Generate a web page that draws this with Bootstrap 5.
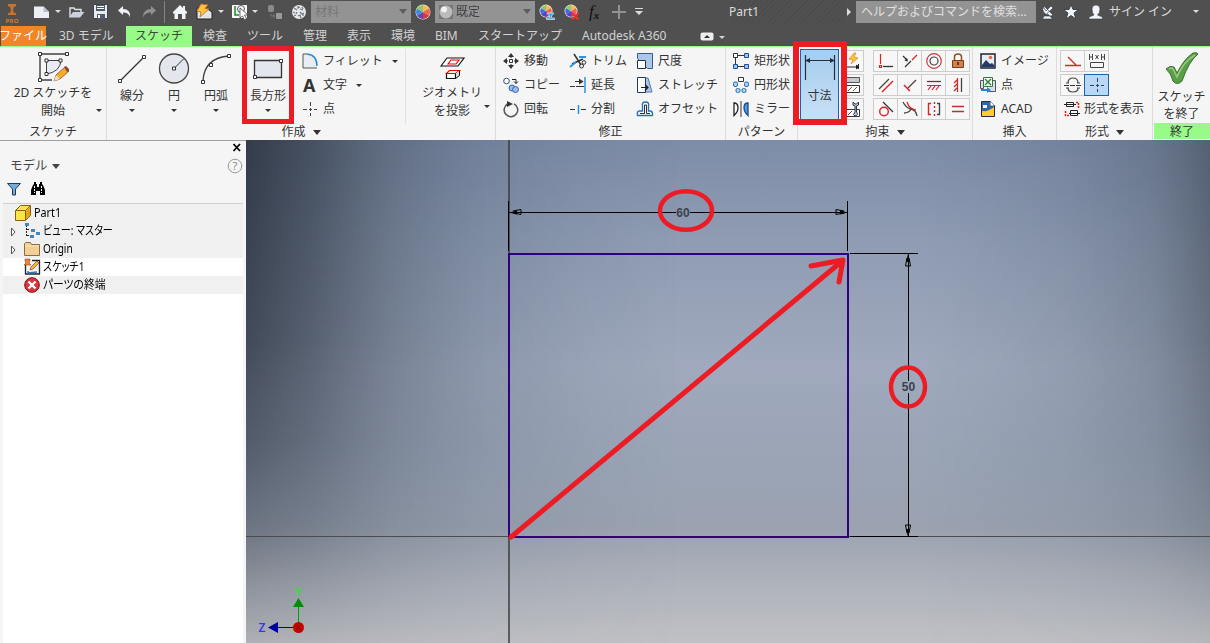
<!DOCTYPE html>
<html lang="ja">
<head>
    <meta charset="UTF-8">
    <meta name="viewport" content="width=device-width, initial-scale=1.0">
    <title>Part1</title>
    <!-- Bootstrap CSS -->
    <link href="https://cdn.jsdelivr.net/npm/bootstrap@5.3.0/dist/css/bootstrap.min.css" rel="stylesheet">
    <style>
        body { width: 1210px; height: 643px; font: 12px/16px "Noto Sans", "Noto Sans CJK JP", sans-serif; color: #333; background: #f5f5f5; }
        svg { display: block; flex: none; overflow: visible; }

        /* Title bar */
        .title-bar { display: grid; height: 22px; background: #505050; color: #dcdcdc; align-items: center;
            grid-template-columns: 34px 21px 14px 24px 24px 25px 18px 12px 24px 22px 13px 21px 15px 24px 20px 104px 20px 103px 25px 26px 22px 22px 96px 116px 11px 185px 23px 24px 21px 84px 17px; }
        .title-bar .caret { display: block; }
        .drop-box { height: 22px; width: 100px; background: #939393; }
        .drop-off { color: #777; }
        .search-box { height: 22px; width: 180px; padding: 0 5px; background: #939393; color: #e0e0e0; line-height: 21px; }
        .fx { font: italic 17px/18px "Liberation Serif", serif; color: #111; }
        .fx sub { font-size: 11px; font-weight: 700; bottom: -2px; }
        .stripes { align-self: stretch; background: repeating-linear-gradient(135deg, #505050 0 3px, #4b4b4b 3px 4px); line-height: 23px; }

        /* Tabs */
        .tab-bar { display: grid; height: 24px; background: #505050; color: #d2d2d2; line-height: 27px;
            grid-template-columns: 59px 67px 77px 44px 56px 44px 44px 44px 43px 104px 117px 1fr; white-space: nowrap; }
        .tab-file { background: #f0852a; color: #fff; width: 45px; height: 20px; margin: 4px 0 0 1px; line-height: 19px; text-indent: -2px; align-self: start; }
        .tab-active { background: #98fb88; color: #444; width: 66px; height: 20px; margin-top: 4px; line-height: 19px; text-align: center; }

        /* Ribbon */
        .ribbon { height: 94px; border-top: 1px solid #98fb88; background: #f5f5f5; }
        .panel { border-right: 1px solid #dcdcdc; padding-top: 2px; flex: none; }
        .panel-body { height: 75px; }
        .panel-label { height: 15px; line-height: 15px; text-align: center; }
        .tool { height: 24px; gap: 4px; }
        .tool-wide { gap: 5px; }
        .tool span { white-space: nowrap; }
        .big { height: 75px; padding-top: 1px; text-align: center; flex: none; }
        .big .txt { line-height: 18px; white-space: nowrap; }
        .big .one { padding-top: 1px; }
        .caret { display: inline-block; width: 0; height: 0; border: 3px solid transparent; border-top: 3px solid currentColor; border-bottom: 0; flex: none; }
        .caret-lg { border-width: 4px; border-top-width: 5px; border-bottom: 0; }
        .btn-grid { display: grid; grid-auto-rows: 24px; }
        .cols-4 { grid-template-columns: repeat(4, 24px); width: 96px; margin-left: 10px; }
        .cols-2 { grid-template-columns: 24px 24px; }
        .cols-1 { width: 22px; margin-left: 2px; }
        .cell { border: 1px solid #ccc; height: 22px; margin: 1px -1px 0 0; display: flex; align-items: center; justify-content: center; background: #f7f7f7; }
        .cell-on { background: #b9d8f5; border-color: #1763ad; position: relative; }
        .dim-btn { width: 39px; height: 73px; margin-left: 2px; background: linear-gradient(#a5cdef, #c9e0f6); border: 1px solid #1763ad; border-bottom: 0; }
        .exit-label { background: #98fb88; height: 16px; line-height: 17px; margin-left: 1px; }
        .w-sketch { width: 107px; } .w-create { width: 389px; } .w-modify { width: 230px; } .w-pattern { width: 72px; }
        .w-limit { width: 175px; } .w-insert { width: 84px; } .w-format { width: 96px; } .w-exit { width: 57px; padding-top: 3px; }
        .w-exit .big { height: 73px; }
        .w-exit .txt { line-height: 17px; padding-top: 3px; }
        .b-34 { width: 34px; } .b-50 { width: 50px; } .b-54 { width: 54px; } .b-89 { width: 89px; } .b-106 { width: 106px; }
        .c-67 { width: 67px; } .c-84 { width: 84px; } .c-111 { width: 111px; }
        .in-7 { padding-left: 7px; } .in-3 { padding-left: 3px; }
        .geo { margin: 0 2px 4px 11px; }

        /* Highlight frames over the ribbon */
        .frame { position: absolute; border: 5px solid #ed1c24; z-index: 3; }
        .frame-rect { left: 242px; top: 46px; width: 52px; height: 78px; }
        .frame-dim { left: 793px; top: 41px; width: 54px; height: 84px; border-width: 6px; }

        /* Model browser */
        .browser { width: 246px; height: 503px; padding: 0 3px; border-top: 1px solid #a0a0a0; }
        .browser-head { height: 63px; border-bottom: 1px solid #d0d0d0; }
        .close-row { height: 15px; padding-right: 2px; }
        .name-row { height: 20px; padding-left: 7px; font-size: 12.5px; gap: 4px; color: #444; }
        .icon-row { height: 25px; gap: 9px; }
        .tree { background: #fff; height: 439px; color: #000; line-height: 18px; }
        .tree-row { height: 18px; gap: 3px; padding-left: 7px; background: #f0f0f0; font-feature-settings: "palt"; }
        .tree-row.leaf { padding-left: 21px; }
        .tree-row.root { padding-left: 12px; }
        .tree-row.current { background: #fff; }
        .narrow { display: inline-block; transform: scaleX(.84); transform-origin: 0 50%; white-space: nowrap; }
        .tree .wide { transform: scaleX(.9); }

        /* Graphics window */
        .view { width: 964px; height: 503px; }
    </style>
</head>
<body class="overflow-hidden position-relative">
    <!-- Title bar -->
    <header class="title-bar">
        <svg width="30" height="22"><path d="M8 3h8v2.500h-2L13 9l1 3h2v2H8v-2h2l1-3-1-3.500H8z" fill="#c8742c"/><text x="5.500" y="21.500" font-size="6" font-weight="700" fill="#dc7a25" textLength="13">PRO</text></svg>
        <svg width="16" height="16" viewBox="0 0 16 16"><path d="M0 2.500h9.500L15 8v6H0z" fill="#eceff5"/><path d="M9.500 2.500V8H15z" fill="#b9c0cd"/></svg>
        <span><i class="caret"></i></span>
        <svg width="16" height="16" viewBox="0 0 16 16"><path d="M1 13V4h4l1 1.500h6V8" fill="none" stroke="#dde2ea" stroke-width="1.400"/><path d="M0 13.500 4 8h11.500L11 13.500z" fill="#cbd2de"/></svg>
        <svg width="16" height="16" viewBox="0 0 16 16"><path d="M.5.500h14v14H.5z" fill="#e7ebf2" stroke="#3b4456"/><path d="M3 1h9v6H3zM4 10h8v5H4z" fill="#50596a"/><path d="M4 2h7v1H4zM4 4h7v1H4zM5 11h2v3H5z" fill="#fff"/></svg>
        <svg width="16" height="16" viewBox="0 0 16 16"><path d="M1 6.500 6 2v3q8 0 7 8.500Q12 8.500 6 8.500V11z" fill="#eef1f6"/></svg>
        <svg width="16" height="16" viewBox="0 0 16 16"><path d="M14 6.500 9 2v3q-8 0-8 8.500Q3 8.500 9 8.500V11z" fill="#8e9091"/></svg>
        <svg width="10" height="22"><path d="M4.500 0v22" stroke="#858585"/></svg>
        <svg width="16" height="16" viewBox="0 0 16 16"><path d="M8 1 1 8v1.500h1.500V15H6v-5h4v5h3.500V9.500H15V8l-2-2V2h-2v2z" fill="#f0f3f7"/></svg>
        <svg width="18" height="16" viewBox="0 0 18 16"><path d="M1 4h9l6 4v7H1z" fill="#dfe5ec" stroke="#222"/><path d="M5 0 1 7l4 1-1 5 9-8-4-.500L12 1z" fill="#ffc342" stroke="#c5681b" stroke-width=".8"/></svg>
        <span><i class="caret"></i></span>
        <svg width="18" height="17" viewBox="0 0 18 17"><path d="M1.500 2.500h14v12h-14z" fill="#f2f5f7" stroke="#fff"/><path d="M4 3v9h4" stroke="#248a25" stroke-width="1.500" fill="none"/><circle cx="10" cy="6" r="3.500" fill="none" stroke="#586070"/><path d="m9 5 0 10 2.500-2 2 4 2-1-2-4H17z" fill="#fff" stroke="#333" stroke-width=".7"/></svg>
        <span><i class="caret"></i></span>
        <svg width="16" height="16" viewBox="0 0 16 16"><rect x="1" y="1" width="6" height="7" rx="2" fill="#8b8b8b"/><rect x="9" y="9" width="6" height="6" rx="1" fill="#999"/><path d="M4 10v2h3M6 10l2 2-2 2" fill="none" stroke="#777"/></svg>
        <svg width="16" height="16" viewBox="0 0 16 16"><circle cx="8" cy="8" r="7" fill="#e6e8ea"/><path d="m3 4 3 2M5 11l-2 1M7 2v2l2-1M9 8l2 2 2-1M6 8l-1 2M9 5l3 1M7 12l2-1 1 3M2 8l2 1M11 3l1 2M12 12v-2" fill="none" stroke="#737984" stroke-width="1.200"/></svg>
        <div class="drop-box drop-off d-flex align-items-center justify-content-between px-1"><span>材料</span><i class="caret caret-lg text-dark opacity-50"></i></div>
        <svg width="16" height="16" viewBox="-8 -8 16 16"><circle r="7.500" fill="#eee"/><path d="M0 0V-7A7 7 0 0 1 6 -3.500z" fill="#f8b95b"/><path d="M0 0 6-3.500A7 7 0 0 1 6 3.500z" fill="#ef6844"/><path d="M0 0 6 3.500A7 7 0 0 1 0 7z" fill="#d43a3f"/><path d="M0 0V7A7 7 0 0 1-6 3.500z" fill="#6443b4"/><path d="M0 0-6 3.500A7 7 0 0 1-6-3.500z" fill="#4189df"/><path d="M0 0-6-3.500A7 7 0 0 1 0-7z" fill="#8dcb62"/></svg>
        <div class="drop-box d-flex align-items-center px-1"><svg width="14" height="14"><path d="M0 0h14v14H0z" fill="#777"/><circle cx="7" cy="7" r="6.500" fill="#bbb"/><circle cx="5" cy="4.500" r="3" fill="#f1f1f1"/></svg><span class="text-dark opacity-75 in-3">既定</span><i class="caret caret-lg text-dark opacity-50 ms-auto"></i></div>
        <svg width="20" height="16" viewBox="-8 -8 20 16"><g transform="translate(0 -1)"><circle r="6.500" fill="#eee"/><path d="M0 0V-6A6 6 0 0 1 5-3z" fill="#f8b95b"/><path d="M0 0 5-3A6 6 0 0 1 5 3z" fill="#ef6844"/><path d="M0 0 5 3A6 6 0 0 1 0 6z" fill="#a43aaf"/><path d="M0 0V6A6 6 0 0 1-5 3z" fill="#5743c4"/><path d="M0 0-5 3A6 6 0 0 1-5-3z" fill="#4169df"/><path d="M0 0-5-3A6 6 0 0 1 0-6z" fill="#8dcb62"/></g><path d="M1 1h7L5.500 4v2h3v1.500h-8V6h3V4z" fill="#35aee8" stroke="#fff" stroke-width=".6"/></svg>
        <svg width="20" height="16" viewBox="-8 -8 20 16"><g transform="translate(0 -1)"><circle r="6.500" fill="#eee"/><path d="M0 0V-6A6 6 0 0 1 5-3z" fill="#f8b95b"/><path d="M0 0 5-3A6 6 0 0 1 5 3z" fill="#ef6844"/><path d="M0 0 5 3A6 6 0 0 1 0 6z" fill="#a43aaf"/><path d="M0 0V6A6 6 0 0 1-5 3z" fill="#5743c4"/><path d="M0 0-5 3A6 6 0 0 1-5-3z" fill="#4169df"/><path d="M0 0-5-3A6 6 0 0 1 0-6z" fill="#8dcb62"/></g><path d="m1 1 6.500 6.500M7.500 1 1 7.500" stroke="#ff2a20" stroke-width="2"/></svg>
        <span class="fx">f<sub>x</sub></span>
        <svg width="16" height="16"><path d="M8 1v14M1 8h14" stroke="#929292" stroke-width="2"/></svg>
        <svg width="12" height="12"><path d="M2 2.500h8" stroke="#ddd"/><path d="M2 5h8L6 9z" fill="#ddd"/></svg>
        <span class="stripes">Part1</span>
        <svg width="8" height="10"><path d="m2 1 4 4-4 4z" fill="#ddd"/></svg>
        <div class="search-box text-nowrap">ヘルプおよびコマンドを検索...</div>
        <svg width="16" height="16" viewBox="0 0 16 16"><path d="M2 2q-2 7 6 9.500l-2-2L12 4l-2-2-5 5zM9 12q2 0 3-1L5 4 3 2q-1 1-1 3M3 12l-1.500 3h10L9 12z" fill="#f0f2f5" stroke="#2d3546" stroke-width=".6"/></svg>
        <svg width="16" height="16" viewBox="0 0 16 16"><path d="m7 .5 2 5h5.500L10 9l2 6-5-3.500L2 15l2-6L-.5 5.500H5z" fill="#f2f4f7" stroke="#333a48" stroke-width=".9"/></svg>
        <svg width="16" height="16" viewBox="0 0 16 16"><path d="M8 1q4 0 4 4t-2.500 6l5 2v2H1v-2l5-2Q4 9 4 5t4-4" fill="#f2f4f7" stroke="#333a48" stroke-width=".6"/></svg>
        <span>サイン イン</span>
        <span><i class="caret"></i></span>
    </header>

    <!-- Ribbon tabs -->
    <nav class="tab-bar">
        <span class="tab-file">ファイル</span>
        <span>3D モデル</span>
        <span class="tab-active">スケッチ</span>
        <span>検査</span>
        <span>ツール</span>
        <span>管理</span>
        <span>表示</span>
        <span>環境</span>
        <span>BIM</span>
        <span>スタートアップ</span>
        <span>Autodesk A360</span>
        <span class="d-flex align-items-center gap-1"><svg width="16" height="8"><rect x="1.500" y=".5" width="13" height="8" rx="2" fill="#eee"/><path d="m5 6 3-3 3 3z" fill="#333"/></svg><i class="caret mt-1"></i></span>
    </nav>

    <!-- Ribbon -->
    <section class="ribbon d-flex">
        <div class="panel w-sketch">
            <div class="panel-body d-flex">
                <div class="big b-106 d-flex flex-column align-items-center">
                    <svg width="34" height="34" viewBox="0 0 34 34"><path d="M4 30V4h27M4 30h12" fill="none" stroke="#404040" stroke-width="1.400"/><path d="M10.500 24V10.500H25Q24 22 10.500 24z" fill="#e8ebf3" stroke="#404040"/><path d="M2.500 2.500h3v3h-3zM29.500 2.500h3v3h-3zM2.500 28.500h3v3h-3zM9 9h3v3H9zM23 9h3v3h-3zM9 22.500h3v3H9z" fill="#fff" stroke="#333"/><path d="m18 31 2-6 9-8 4 4-9 8z" fill="#f7ab2b" stroke="#805023" stroke-width=".8"/><path d="m28 17 2-1 3 3v2l-2 1z" fill="#8b4a34"/><path d="m18 31 2-6 4 4z" fill="#f5dfc0"/></svg>
                    <div class="d-flex align-items-center in-7"><div class="txt in-3">2D スケッチを<br>開始</div><i class="caret ms-1 mt-3"></i></div>
                </div>
            </div>
            <div class="panel-label">スケッチ</div>
        </div>

        <div class="panel w-create">
            <div class="panel-body d-flex">
                <div class="big b-50 d-flex flex-column align-items-center">
                    <svg width="36" height="36"><path d="m6 31 24-24" stroke="#333" stroke-width="1.300"/><path d="M4.500 29.500h3v3h-3zM28.500 5.500h3v3h-3z" fill="#fff" stroke="#333"/></svg>
                    <div class="txt one">線分</div><i class="caret mt-1"></i>
                </div>
                <div class="big b-34 d-flex flex-column align-items-center">
                    <svg width="36" height="36"><circle cx="18" cy="18.500" r="14.500" fill="#e3e6ec" stroke="#444" stroke-width="1.300"/><path d="M18 18.500 28 8.500" stroke="#333"/><path d="M16.500 17h3v3h-3z" fill="#fff" stroke="#333"/></svg>
                    <div class="txt one">円</div><i class="caret mt-1"></i>
                </div>
                <div class="big b-50 d-flex flex-column align-items-center">
                    <svg width="36" height="36"><path d="M5 31Q6 8 31 6" fill="none" stroke="#444" stroke-width="1.400"/><path d="M3.500 30.500h3v3h-3zM11.500 13.500h3v3h-3zM29.500 4.500h3v3h-3z" fill="#fff" stroke="#333"/></svg>
                    <div class="txt one">円弧</div><i class="caret mt-1"></i>
                </div>
                <div class="big b-54 d-flex flex-column align-items-center">
                    <svg width="36" height="36"><path d="M4.500 10.500h27v17h-27z" fill="#e3e6ec" stroke="#333" stroke-width="1.300"/><path d="M3.500 25.500h3v3h-3zM29.500 9.500h3v3h-3z" fill="#fff" stroke="#333"/></svg>
                    <div class="txt one">長方形</div><i class="caret mt-1"></i>
                </div>
                <div class="border-end in-7 c-111">
                    <div class="tool tool-wide d-flex align-items-center"><svg width="16" height="16"><path d="M1 15V1q14 0 14 14z" fill="#e9edf3"/><path d="M1 15V1h4M15 15H1" fill="none" stroke="#555"/><path d="M5 1q10 1 10 12" fill="none" stroke="#2789d0" stroke-width="1.500"/></svg><span>フィレット</span><i class="caret ms-1"></i></div>
                    <div class="tool tool-wide d-flex align-items-center"><svg width="16" height="16"><text x="1" y="15" font-size="18" font-weight="700" font-family="Open Sans" fill="#333">A</text></svg><span>文字</span><i class="caret ms-1"></i></div>
                    <div class="tool tool-wide d-flex align-items-center"><svg width="16" height="16"><path d="M1 8.500h4M7 8.500h3M12 8.500h3M8.500 1v4M8.500 7v3M8.500 12v3" stroke="#444"/></svg><span>点</span></div>
                </div>
                <div class="big b-89 d-flex align-items-end justify-content-center">
                    <div class="geo d-flex flex-column align-items-center">
                        <svg width="34" height="36"><path d="m6 18 6-8h17l-6 8z" fill="#fff" stroke="#111" stroke-width="1.200"/><path d="m13 16 3-4h8l-3 4z" fill="none" stroke="#e00" stroke-width="1.200"/><path d="M11.500 25.500h9v5h-9z" fill="#fff" stroke="#111" stroke-width="1.200"/><path d="m11.500 25.500 3-3h10l-4 3z" fill="#fff" stroke="#e00" stroke-width="1.200"/><path d="M20.500 25.500v5l4-3v-5" fill="#d3dce9" stroke="#111"/></svg>
                        <div class="txt">ジオメトリ<br>を投影</div>
                    </div>
                    <i class="caret mb-3"></i>
                </div>
            </div>
            <div class="panel-label">作成 <i class="caret caret-lg align-middle ms-1"></i></div>
        </div>

        <div class="panel w-modify">
            <div class="panel-body d-flex in-7">
                <div class="c-67">
                    <div class="tool tool-wide d-flex align-items-center"><svg width="16" height="16"><path d="M8 0 11 4H5zM8 16l3-4H5zM0 8l4-3v6zM16 8l-4-3v6z" fill="#333"/><path d="M6.500 6.500h3v3h-3zM8 3v2M8 11v2M3 8h2M11 8h2" fill="none" stroke="#333"/></svg><span>移動</span></div>
                    <div class="tool tool-wide d-flex align-items-center"><svg width="16" height="16"><circle cx="3.500" cy="4" r="2.800" fill="#fff" stroke="#31517c"/><circle cx="9" cy="11" r="3" fill="#9bbbf0" stroke="#3466ad"/><circle cx="12.500" cy="12.500" r="3" fill="#9bbbf0" stroke="#3466ad"/><path d="M9 2.500h4v4M11 4.500l2 2 2-2" fill="none" stroke="#222"/></svg><span>コピー</span></div>
                    <div class="tool tool-wide d-flex align-items-center"><svg width="16" height="16"><path d="M4.500 3A6.800 6.800 0 1 0 11 2.800" fill="none" stroke="#555" stroke-width="1.500"/><path d="M4 0v6l6-3z" fill="#333"/></svg><span>回転</span></div>
                </div>
                <div class="c-67">
                    <div class="tool d-flex align-items-center"><svg width="17" height="16"><path d="m4 1 7 11M13 6 2 11" stroke="#333" stroke-width="1.500"/><path d="M9 4h7M0 14l6-5" stroke="#2694e8" stroke-width="1.800"/><circle cx="11.500" cy="13" r="2" fill="none" stroke="#333"/><circle cx="14" cy="9.500" r="1.800" fill="none" stroke="#333"/></svg><span>トリム</span></div>
                    <div class="tool tool-wide d-flex align-items-center"><svg width="16" height="16"><path d="M0 9.500h5M6 9.500h8M5 4.500h8" fill="none" stroke="#333"/><path d="m9 1.500 4.500 3-4.500 3z" fill="#333"/><path d="M15 0v16" stroke="#2694e8" stroke-width="1.500"/></svg><span>延長</span></div>
                    <div class="tool tool-wide d-flex align-items-center"><svg width="16" height="16"><path d="M0 8.500h5M11 8.500h5" stroke="#333"/><path d="M8.500 4v9" stroke="#2694e8" stroke-width="1.500"/></svg><span>分割</span></div>
                </div>
                <div class="c-84">
                    <div class="tool tool-wide d-flex align-items-center"><svg width="16" height="16"><path d="M.5 5.500V.5h15v15h-5z" fill="#adc7e9" stroke="#355c91"/><path d="M.5 7.500h8v8h-8z" fill="#fff" stroke="#234"/></svg><span>尺度</span></div>
                    <div class="tool tool-wide d-flex align-items-center"><svg width="16" height="16"><path d="M8 1h3l4 14H8z" fill="#adc7e9" stroke="#4a7dbd"/><path d="M.5.5h8v15h-8z" fill="#fff" stroke="#223a60"/><path d="M4 10.500h7M8 7.500l3 3-3 3" fill="none" stroke="#222" stroke-width="1.200"/></svg><span>ストレッチ</span></div>
                    <div class="tool tool-wide d-flex align-items-center"><svg width="16" height="16"><path d="M.5 14.500q-1-4 2-4.500h3V5q-1-4 3-4t3 4v5h2q2.500.500 2 4.500z" fill="none" stroke="#2a70b8" stroke-width="1.300"/><path d="M3 12.500h4.500V4h2v8.500H13" fill="none" stroke="#333"/></svg><span>オフセット</span></div>
                </div>
            </div>
            <div class="panel-label">修正</div>
        </div>

        <div class="panel w-pattern">
            <div class="panel-body in-7">
                <div class="tool tool-wide d-flex align-items-center"><svg width="16" height="16"><path d="M5 2.500h6M2.500 5v6M5 13.500h6" stroke="#333"/><path d="M.5.5h4v4h-4z" fill="#fff" stroke="#333"/><path d="M11.500.5h4v4h-4zM.5 11.500h4v4h-4zM11.500 11.500h4v4h-4z" fill="#9fc3ee" stroke="#1e4fa0"/></svg><span>矩形状</span></div>
                <div class="tool tool-wide d-flex align-items-center"><svg width="16" height="16"><path d="M5.500.5h5v4h-5z" fill="#fff" stroke="#333"/><rect x=".5" y="5" width="4" height="4.500" rx="1.500" fill="#a9d5f5" stroke="#2a6bb0"/><rect x="11.500" y="5" width="4" height="4.500" rx="1.500" fill="#a9d5f5" stroke="#2a6bb0"/><rect x="3" y="11.500" width="4" height="4" rx="1.500" fill="#a9d5f5" stroke="#2a6bb0"/><rect x="9" y="11.500" width="4" height="4" rx="1.500" fill="#a9d5f5" stroke="#2a6bb0"/></svg><span>円形状</span></div>
                <div class="tool tool-wide d-flex align-items-center"><svg width="16" height="16"><path d="M1 14.500V2q4 0 4 4.500T1 14.500z" fill="#fff" stroke="#222" stroke-width="1.300"/><path d="M8 0v16" stroke="#333"/><path d="M15 14.500V2q-4 0-4 4.500t4 8z" fill="#5795df" stroke="#174c91" stroke-width="1.300"/></svg><span>ミラー</span></div>
            </div>
            <div class="panel-label">パターン</div>
        </div>

        <div class="panel w-limit">
            <div class="panel-body d-flex">
                <div class="dim-btn text-center">
                    <svg width="37" height="38"><path d="M4.500 5v25M33.500 5v25M5 10.500h28" stroke="#223040" stroke-width="1.200"/><path d="m4 10.500 5-2.500v5zM34 10.500l-5-2.500v5z" fill="#223040"/></svg>
                    <span>寸法</span>
                </div>
                <div class="btn-grid cols-1">
                    <span class="cell"><svg width="16" height="16"><path d="M9 0 4 6l4 1-2 4 7-6-4-1 2-4z" fill="#ffc43b" stroke="#d6861c" stroke-width=".7"/><path d="M1 14h13M13.500 11v5M11 12l3 2-3 2" stroke="#222"/></svg></span>
                    <span class="cell"><svg width="16" height="16"><path d="M1.500.5h13v5h-13z" fill="#c5c8d0" stroke="#555"/><path d="M1.500 8.500h13v7h-13z" fill="#fff" stroke="#333"/><path d="m3 14 4-4M8 14l4-4" stroke="#874b30"/></svg></span>
                    <span class="cell"><svg width="16" height="16"><path d="M1.500 8.500h13v7h-13z" fill="#fff" stroke="#333"/><path d="m3 14 4-4" stroke="#874b30"/><path d="M8 1v3l2 1v6q-3 3 0 4 4-1 1.500-4V5l2-1V1l-2 2h-1.500z" fill="#abc7e8" stroke="#334"/></svg></span>
                </div>
                <div class="btn-grid cols-4">
                    <span class="cell"><svg width="16" height="16"><path d="M2.500 1v10M1.500 12.500h2v2h-2z" fill="none" stroke="#d22" stroke-width="1.200"/><path d="M5 13.500h10" stroke="#333" stroke-width="1.300"/></svg></span>
                    <span class="cell"><svg width="16" height="16"><path d="m3 14 6-6M1 3l4 4" stroke="#333" stroke-width="1.200"/><path d="m10 7 5-5" stroke="#d22" stroke-width="1.300"/><path d="M6 8.500 2.500 7.500 5 5z" fill="#222"/></svg></span>
                    <span class="cell"><svg width="16" height="16"><circle cx="8" cy="8" r="7.300" fill="none" stroke="#d23434" stroke-width="1.200"/><circle cx="8" cy="8" r="4" fill="none" stroke="#444" stroke-width="1.200"/></svg></span>
                    <span class="cell"><svg width="16" height="16"><path d="M4.500 7V4q0-3 3.500-3t3.500 3v3" fill="none" stroke="#8f4b26" stroke-width="1.500"/><path d="M2.500 7.500h11v7h-11z" fill="#d5814c" stroke="#7a3c1e"/><path d="M8 9v3" stroke="#42200e" stroke-width="1.500"/></svg></span>
                    <span class="cell"><svg width="16" height="16"><path d="m1 12 10-10" stroke="#444" stroke-width="1.300"/><path d="m4 15 11-11" stroke="#d22" stroke-width="1.400"/></svg></span>
                    <span class="cell"><svg width="16" height="16"><path d="M6 11 14 3" stroke="#444" stroke-width="1.300"/><path d="m2 8 6 6" stroke="#d22" stroke-width="1.500"/></svg></span>
                    <span class="cell"><svg width="16" height="16"><path d="M1 4.500h14" stroke="#444" stroke-width="1.300"/><path d="M1 8.500h14M5 9l-3 4M9 9l-3 4M13 9l-3 4" stroke="#d22" stroke-width="1.200"/></svg></span>
                    <span class="cell"><svg width="16" height="16"><path d="M11.500 1v14" stroke="#444" stroke-width="1.300"/><path d="M7.500 1v14M7 3 4 6M7 7l-3 3M7 11l-3 3" stroke="#d22" stroke-width="1.200"/></svg></span>
                    <span class="cell"><svg width="16" height="16"><circle cx="6" cy="10.500" r="4.300" fill="none" stroke="#d22" stroke-width="1.400"/><path d="m5 1 10 10" stroke="#333" stroke-width="1.300"/></svg></span>
                    <span class="cell"><svg width="16" height="16"><path d="M1 1q3 6 8 7t6 7M9 8q-2 4-7 4" fill="none" stroke="#444" stroke-width="1.300"/><path d="M5 1q2 7 9 8" fill="none" stroke="#d22" stroke-width="1.200"/></svg></span>
                    <span class="cell"><svg width="16" height="16"><path d="M5 2.500H2.500v11H5M8.500 1v2M8.500 5v2M8.500 9v2M8.500 13v2" fill="none" stroke="#d22" stroke-width="1.400"/><path d="M11 2.500h2.500v11H11" fill="none" stroke="#444" stroke-width="1.400"/></svg></span>
                    <span class="cell"><svg width="16" height="16"><path d="M2 5.500h12M2 10.500h12" stroke="#c92a2a" stroke-width="1.300"/></svg></span>
                </div>
            </div>
            <div class="panel-label">拘束 <i class="caret caret-lg align-middle ms-1"></i></div>
        </div>

        <div class="panel w-insert">
            <div class="panel-body in-7">
                <div class="tool tool-wide d-flex align-items-center"><svg width="16" height="16"><path d="M1 1h14v14H1z" fill="#e5eef8" stroke="#223" stroke-width="1.500"/><circle cx="10.500" cy="4.500" r="1.800" fill="#e9703a"/><path d="m2 12 4-5 4 4 2-1 2 2v2H2z" fill="#233c66"/></svg><span>イメージ</span></div>
                <div class="tool tool-wide d-flex align-items-center"><svg width="16" height="16"><path d="M.5 3.500h3v8h-3zM12.500 3.500h3v11h-8" fill="#d6dee6" stroke="#556"/><path d="M3.500.5h9v9h-9z" fill="#f5fff5" stroke="#26803a"/><path d="m5 2 6 6M11 2 5 8" stroke="#26803a" stroke-width="1.400"/><path d="M1 12h6v-2l4 3-4 3v-2H1z" fill="#2785d8"/></svg><span>点</span></div>
                <div class="tool tool-wide d-flex align-items-center"><svg width="16" height="16"><path d="M1.500.5h9l4 4v11h-13z" fill="#3466a3" stroke="#222e44"/><path d="M2 10q6 1 12-4v9H2z" fill="#ffcd2f"/><path d="M10.500.5v4h4z" fill="#fff"/><path d="M3 4h4v3H3z" fill="#e9f3fb"/></svg><span>ACAD</span></div>
            </div>
            <div class="panel-label">挿入</div>
        </div>

        <div class="panel w-format">
            <div class="panel-body in-3">
                <div class="btn-grid cols-2">
                    <span class="cell"><svg width="18" height="16"><path d="M1 12.500h16M4 4l8 8" stroke="#d12b2b" stroke-width="1.400"/></svg></span>
                    <span class="cell"><svg width="18" height="16"><path d="M1.500 1v6M4.500 1v6M1 4h4M13.500 1v6M16.500 1v6M13 4h4M7.500 2l3 4M10.500 2l-3 4M2.500 9.500h13v5h-13z" fill="none" stroke="#444"/></svg></span>
                    <span class="cell"><svg width="18" height="16"><path d="M4 6q0-5 5-5t5 5M4 11q0 4 5 4t5-4M2 6h3M13 6h3M2 11h3M13 11h3" fill="none" stroke="#444" stroke-width="1.200"/><path d="M0 8.500h17" stroke="#333" stroke-dasharray="5 1"/></svg></span>
                    <span class="cell cell-on"><svg width="16" height="16"><path d="M1 8.500h4M7 8.500h3M12 8.500h3M8.500 1v4M8.500 7v3M8.500 12v3" stroke="#345"/></svg></span>
                </div>
                <div class="tool d-flex align-items-center ps-1"><svg width="16" height="16"><path d="M2.500 1.500h7v4h-7zM6.500 9.500h7v5h-7zM0 3.500h12M5 12.500h11" fill="none" stroke="#222"/><path d="M12 1.500h2.500V7M5 14.500H1.500V9" fill="none" stroke="#e11" stroke-dasharray="2 1" stroke-width="1.500"/></svg><span>形式を表示</span></div>
            </div>
            <div class="panel-label">形式 <i class="caret caret-lg align-middle ms-1"></i></div>
        </div>

        <div class="w-exit">
            <div class="big d-flex flex-column align-items-center">
                <svg width="34" height="34"><path d="M1 18q4-4 8-2l3 6Q19 8 28 2q4-1 5 1-9 7-16 27-5 5-9 0Q6 22 1 18z" fill="#5b9e49" stroke="#37742b"/><path d="M4 18q3-2 4 0l4 8Q18 11 30 4" fill="none" stroke="#98ca80" stroke-width="1.500"/></svg>
                <div class="txt">スケッチ<br>を終了</div>
            </div>
            <div class="panel-label exit-label">終了</div>
        </div>
    </section>

    <div class="frame frame-rect"></div>
    <div class="frame frame-dim"></div>

    <main class="d-flex">
        <!-- Model browser -->
        <aside class="browser">
            <div class="browser-head">
                <div class="close-row d-flex justify-content-end"><svg width="8" height="16"><path d="m.5 3 6.500 7M7 3 .5 10" stroke="#000" stroke-width="1.800"/></svg></div>
                <div class="name-row d-flex align-items-center"><span>モデル</span><i class="caret caret-lg"></i><svg class="ms-auto" width="16" height="16"><circle cx="8" cy="8" r="6.800" fill="none" stroke="#999"/><text x="5.500" y="12" font-size="11" fill="#888">?</text></svg></div>
                <div class="icon-row d-flex align-items-center ps-1"><svg width="14" height="14"><path d="M.5 1.500h13L8.500 7v6h-3V7z" fill="#74add9" stroke="#213b58"/></svg><svg width="16" height="14"><path d="M4 0h2v2h1v3h2V2h1V0h2v2l1 1 2 5v5h-5V9H6v4H1V8l2-5 1-1z" fill="#000"/><path d="M4.500 4v7M11.500 4v7" stroke="#fff" stroke-dasharray="2 1"/></svg></div>
            </div>
            <div class="tree">
                <div class="tree-row root d-flex align-items-center"><svg width="16" height="16"><path d="m.5 5.500 5-5h10v10l-5 5H.5z" fill="#ffe34b" stroke="#925b12"/><path d="M.5 5.500h10v10M10.500 5.500l5-5" fill="none" stroke="#925b12"/><path d="M11 6l4-4v8.500l-4 4z" fill="#daa51c"/></svg><span class="narrow wide">Part1</span></div>
                <div class="tree-row d-flex align-items-center"><svg width="11" height="12"><path d="m1.500 3 3.500 4-3.500 4z" fill="#fff" stroke="#555"/></svg><svg width="16" height="16"><path d="M2.500 2v11M3 6.500h3M3 12.500h3M8 8h3" stroke="#222" stroke-dasharray="2 1"/><path d="M1 0h4v3H1zM7 6h4v3H7zM6 12h4v3H6zM12 9h4v3h-4z" fill="#4285c1"/></svg><span class="narrow">ビュー: マスター</span></div>
                <div class="tree-row d-flex align-items-center"><svg width="11" height="12"><path d="m1.500 3 3.500 4-3.500 4z" fill="#fff" stroke="#555"/></svg><svg width="16" height="16"><path d="M.5 14.500v-12l1-1h5l1 2h8v11z" fill="#f3cf96" stroke="#8b6b40"/><path d="M1 5h14" stroke="#fae4bc"/></svg><span class="narrow">Origin</span></div>
                <div class="tree-row leaf current d-flex align-items-center"><svg width="16" height="16"><path d="M1.500 5v10h14V1.500H8" fill="#f4f4f4" stroke="#222" stroke-width="1.300"/><path d="M4 12v2l9-1" fill="none" stroke="#2878b8" stroke-width="1.500"/><path d="m6 11 1-3 6-6 2 2-6 6z" fill="#ffb52e" stroke="#744" stroke-width=".7"/><path d="M1 0h5v2L5 4l2 2H0l2-2-1-2z" fill="#e9853f" stroke="#9b4119" stroke-width=".6"/></svg><span class="narrow">スケッチ1</span></div>
                <div class="tree-row leaf d-flex align-items-center"><svg width="16" height="16"><circle cx="8" cy="8" r="7.300" fill="#df3339" stroke="#731119"/><path d="m4.500 4.500 7 7M11.500 4.500l-7 7" stroke="#fff" stroke-width="2.400"/></svg><span class="narrow wide">パーツの終端</span></div>
            </div>
        </aside>

        <!-- Sketch drawing, in window coordinates -->
        <svg class="view" viewBox="246 140 964 503">
            <defs>
                <linearGradient id="sky" x1="0" y1="0" x2="0" y2="1">
                    <stop offset="0" stop-color="#7d8ca7"/><stop offset=".2" stop-color="#8f9cb3"/><stop offset=".45" stop-color="#a0a9bd"/><stop offset=".65" stop-color="#9aa4b5"/><stop offset=".77" stop-color="#9ba2b0"/><stop offset=".86" stop-color="#abb0b9"/><stop offset="1" stop-color="#c0c1c5"/>
                </linearGradient>
                <linearGradient id="side" x1="0" y1="0" x2="1" y2="0">
                    <stop offset="0" stop-color="#303744" stop-opacity=".95"/><stop offset=".07" stop-color="#343d4b" stop-opacity=".75"/><stop offset=".15" stop-color="#465162" stop-opacity=".52"/><stop offset=".25" stop-color="#5a6a80" stop-opacity=".32"/><stop offset=".35" stop-color="#5a6a80" stop-opacity=".12"/><stop offset=".45" stop-color="#5a6a80" stop-opacity="0"/><stop offset=".7" stop-color="#5a6a80" stop-opacity="0"/><stop offset=".85" stop-color="#4c5a6e" stop-opacity=".18"/><stop offset=".94" stop-color="#465264" stop-opacity=".38"/><stop offset="1" stop-color="#38424f" stop-opacity=".6"/>
                </linearGradient>
                <linearGradient id="fade" x1="0" y1="0" x2="0" y2="1"><stop offset="0" stop-color="#fff"/><stop offset=".4" stop-color="#e0e0e0"/><stop offset=".6" stop-color="#b4b4b4"/><stop offset=".78" stop-color="#707070"/><stop offset=".88" stop-color="#484848"/><stop offset="1" stop-color="#202020"/></linearGradient>
                <mask id="sideMask"><path d="M246 140h964v503H246z" fill="url(#fade)"/></mask>
            </defs>
            <path d="M246 140h964v503H246z" fill="url(#sky)"/>
            <path d="M246 140h964v503H246z" fill="url(#side)" mask="url(#sideMask)"/>
            <path d="M509 140v503" stroke="#3c3c3c" stroke-width="1.500"/>
            <path d="M246 536.500h964" stroke="#4c4c4c"/>
            <path d="M509 254h339v283H509z" fill="none" stroke="#30007f" stroke-width="2"/>
            <path d="M508.500 201v50M847.500 201v50M509 212.500h167M690 212.500h158M850 253.500h68M850 536.500h68M908.500 254v127M908.500 393v144" stroke="#000"/>
            <path d="m513 211 8-1.500v5l-8-1.500M844 211l-8-1.500v5l8-1.500M907 258l-1.500 8h5l-1.500-8M907 533l-1.500-8h5l-1.500 8" fill="none" stroke="#000"/>
            <path d="m509 212.500 8-2v4zM848 212.500l-8-2v4zM908 254l-2 8h4zM908 537l-2-8h4z" fill="#000"/>
            <g font-family="Liberation Sans" font-size="12" font-weight="700" fill="#3a414d" text-anchor="middle"><text x="683" y="217">60</text><text x="908.500" y="391">50</text></g>
            <g fill="none" stroke="#ed1c24" stroke-width="4.500">
                <ellipse cx="686" cy="210.500" rx="26" ry="19.300"/>
                <ellipse cx="908" cy="387" rx="17" ry="19.500"/>
                <path d="M511 537 841 262M811 266l32-6-4 22" stroke-width="5" stroke-linecap="round" stroke-linejoin="round"/>
            </g>
            <!-- Axis triad -->
            <path d="M298.500 627v-20" stroke="#00a000"/><path d="m298.500 598 5.500 9h-11z" fill="#009000"/>
            <path d="M298 627.500h-20" stroke="#00009c"/><path d="m268 627.500 10-5.500v11z" fill="#00009c"/>
            <circle cx="298.500" cy="627.500" r="5.500" fill="#c50000"/><path d="m296 625 5 5M301 625l-5 5" stroke="#700"/>
            <text x="295" y="595.500" font-size="11" font-weight="600" fill="#2be32b">Y</text><text x="258.500" y="632" font-size="12" font-weight="600" fill="#3636e8">Z</text>
        </svg>
    </main>

    <!-- Bootstrap JS -->
    <script src="https://cdn.jsdelivr.net/npm/bootstrap@5.3.0/dist/js/bootstrap.bundle.min.js"></script>
</body>
</html>
